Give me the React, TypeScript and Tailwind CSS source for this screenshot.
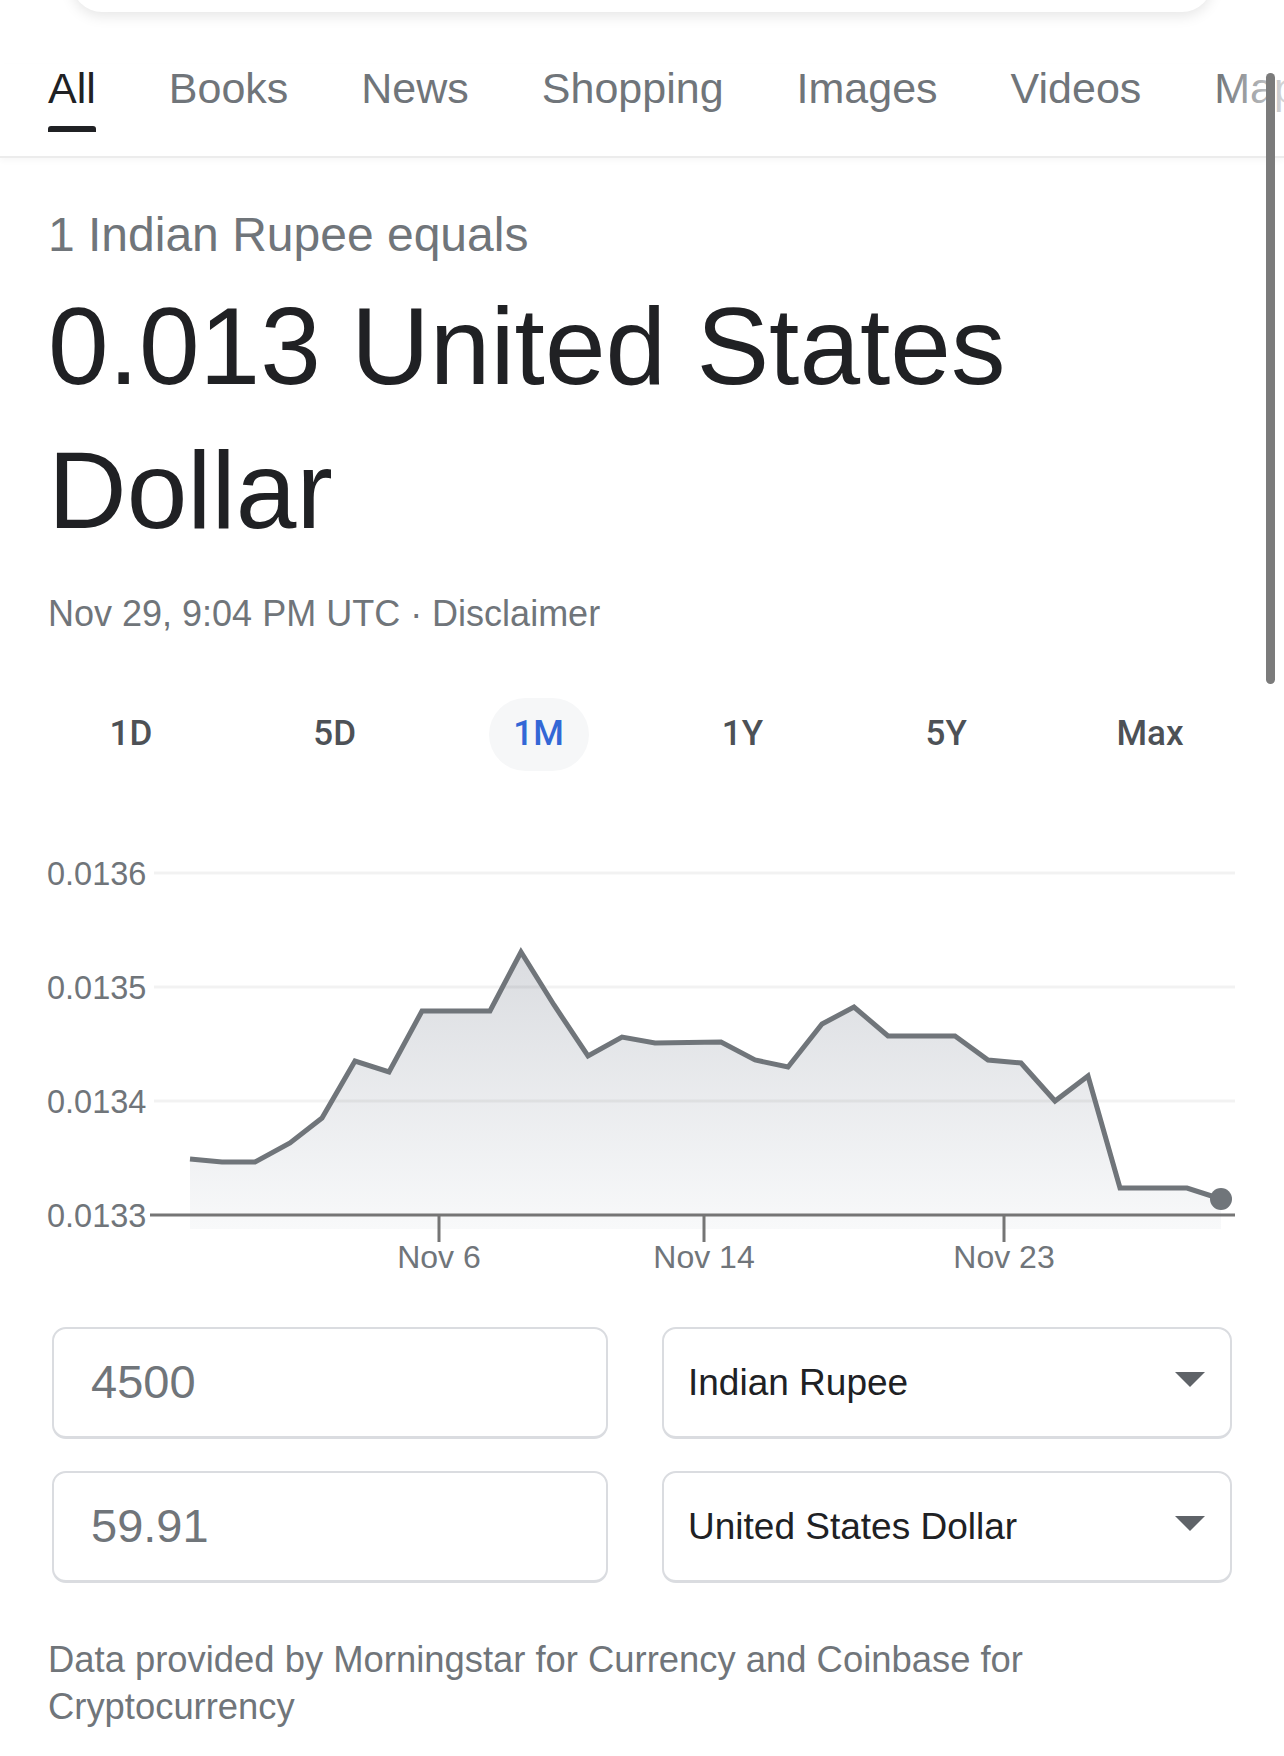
import React from 'react';

const TABS = ['All', 'Books', 'News', 'Shopping', 'Images', 'Videos', 'Maps'];
const RANGES = ['1D', '5D', '1M', '1Y', '5Y', 'Max'];

// chart vertices, page coords
const POINTS: [number, number][] = [
  [190, 1159], [222, 1162], [255, 1162], [290, 1143], [322, 1118], [355, 1061],
  [389, 1072], [422, 1011], [490, 1011], [521, 952], [554, 1005], [588, 1056],
  [622, 1037], [655, 1043], [721, 1042], [755, 1060], [788, 1067], [822, 1024],
  [854, 1007], [888, 1036], [955, 1036], [988, 1060], [1021, 1063], [1055, 1101],
  [1088, 1076], [1120, 1188], [1187, 1188], [1221, 1199],
];

const GRID = [
  { y: 873, label: '0.0136' },
  { y: 987, label: '0.0135' },
  { y: 1101, label: '0.0134' },
];

const TICKS = [
  { x: 439, label: 'Nov 6' },
  { x: 704, label: 'Nov 14' },
  { x: 1004, label: 'Nov 23' },
];

const LABEL_FONT = "'Liberation Sans', Arial, sans-serif";

const RateChart: React.FC = () => {
  const line = POINTS.map((p) => p.join(',')).join(' ');
  const area = `${line} 1221,1229 190,1229`;
  const last = POINTS[POINTS.length - 1];

  return (
    <svg width={1284} height={450} viewBox="0 840 1284 450" className="block">
      <defs>
        <linearGradient id="areaFill" x1="0" y1="0" x2="0" y2="1">
          <stop offset="0" stopColor="#dadce0" />
          <stop offset="1" stopColor="#f8f9fa" />
        </linearGradient>
      </defs>
      <polygon points={area} fill="url(#areaFill)" />
      {GRID.map((g) => (
        <g key={g.label}>
          <line x1={154} x2={1235} y1={g.y} y2={g.y} stroke="#000" strokeOpacity={0.05} strokeWidth={3} />
          <text x={47} y={g.y + 11.5} fontSize={32.5} fill="#70757a" fontFamily={LABEL_FONT}>
            {g.label}
          </text>
        </g>
      ))}
      <text x={47} y={1226.5} fontSize={32.5} fill="#70757a" fontFamily={LABEL_FONT}>
        0.0133
      </text>
      <line x1={150} x2={1235} y1={1215} y2={1215} stroke="#757575" strokeWidth={3} />
      {TICKS.map((t) => (
        <g key={t.label}>
          <line x1={t.x} x2={t.x} y1={1215} y2={1242} stroke="#757575" strokeWidth={3} />
          <text x={t.x} y={1268} fontSize={32} fill="#70757a" textAnchor="middle" fontFamily={LABEL_FONT}>
            {t.label}
          </text>
        </g>
      ))}
      <polyline points={line} fill="none" stroke="#70757a" strokeWidth={5} strokeLinejoin="miter" />
      <circle cx={last[0]} cy={last[1]} r={11} fill="#70757a" />
    </svg>
  );
};

const Caret: React.FC = () => (
  <svg width={30} height={15} viewBox="0 0 30 15" className="mb-[6px] shrink-0">
    <polygon points="0,0 30,0 15,15" fill="#5f6368" />
  </svg>
);

const App: React.FC = () => {
  return (
    <div className="relative min-h-[1756px] w-[1284px] overflow-hidden bg-white font-['Liberation_Sans',Arial,sans-serif]">
      {/* bottom of the search box */}
      <div className="mx-[72px] -mt-[48px] h-[60px] rounded-[32px] bg-white shadow-[0_4px_14px_rgba(0,0,0,0.10)]" />

      <nav className="relative mt-[52px] flex gap-[73px] overflow-hidden whitespace-nowrap border-b-2 border-[#ececec] pl-[48px] shadow-[0_3px_6px_rgba(0,0,0,0.03)]">
        {TABS.map((tab, i) => (
          <div key={tab} className="flex flex-col pb-[24px]">
            <span className={`text-[43px] leading-[48px] ${i === 0 ? 'text-[#202124]' : 'text-[#70757a]'}`}>{tab}</span>
            <span className={`mt-[14px] h-[6px] rounded-t-[3px] ${i === 0 ? 'bg-[#202124]' : 'bg-transparent'}`} />
          </div>
        ))}
        <div className="pointer-events-none absolute right-0 top-0 h-full w-[67px] bg-gradient-to-r from-white/0 to-white/70" />
      </nav>

      <section className="px-[48px]">
        <p className="mt-[49px] text-[48px] leading-[56px] text-[#70757a]">1 Indian Rupee equals</p>
        <h1 className="mt-[11px] text-[109px] leading-[144px] text-[#202124]">0.013 United States Dollar</h1>
        <p className="mt-[28px] text-[36px] leading-[48px] text-[#70757a]">Nov 29, 9:04 PM UTC · Disclaimer</p>
      </section>

      <div className="mt-[60px] grid grid-cols-6 pl-[29px] pr-[32px]">
        {RANGES.map((r) => (
          <div key={r} className="flex justify-center">
            <button
              type="button"
              className={`flex h-[73px] w-[100px] items-center justify-center rounded-full font-['Roboto',Arial,sans-serif] text-[35px] font-medium ${
                r === '1M' ? 'bg-[#f6f7f8] text-[#3367d6]' : 'text-[#4d5156]'
              }`}
            >
              {r}
            </button>
          </div>
        ))}
      </div>

      <div className="mt-[69px]">
        <RateChart />
      </div>

      <div className="mt-[37px] flex flex-col gap-[32px] px-[52px]">
        {[
          { amount: '4500', currency: 'Indian Rupee' },
          { amount: '59.91', currency: 'United States Dollar' },
        ].map((row) => (
          <div key={row.currency} className="flex gap-[54px]">
            <div className="flex h-[112px] w-[556px] items-center rounded-[14px] border-2 border-b-[3px] border-[#dadce0] pl-[37px] text-[47px] text-[#70757a]">
              {row.amount}
            </div>
            <div className="flex h-[112px] flex-1 items-center justify-between rounded-[14px] border-2 border-b-[3px] border-[#dadce0] pl-[24px] pr-[25px] text-[37px] text-[#202124]">
              <span>{row.currency}</span>
              <Caret />
            </div>
          </div>
        ))}
      </div>

      <p className="mt-[53px] px-[48px] text-[36.4px] leading-[47px] text-[#70757a]">
        Data provided by Morningstar for Currency and Coinbase for Cryptocurrency
      </p>

      {/* page scrollbar */}
      <div className="absolute right-[9px] top-[73px] h-[611px] w-[9px] rounded-full bg-[#7b7b7b]" />
    </div>
  );
};

export default App;
